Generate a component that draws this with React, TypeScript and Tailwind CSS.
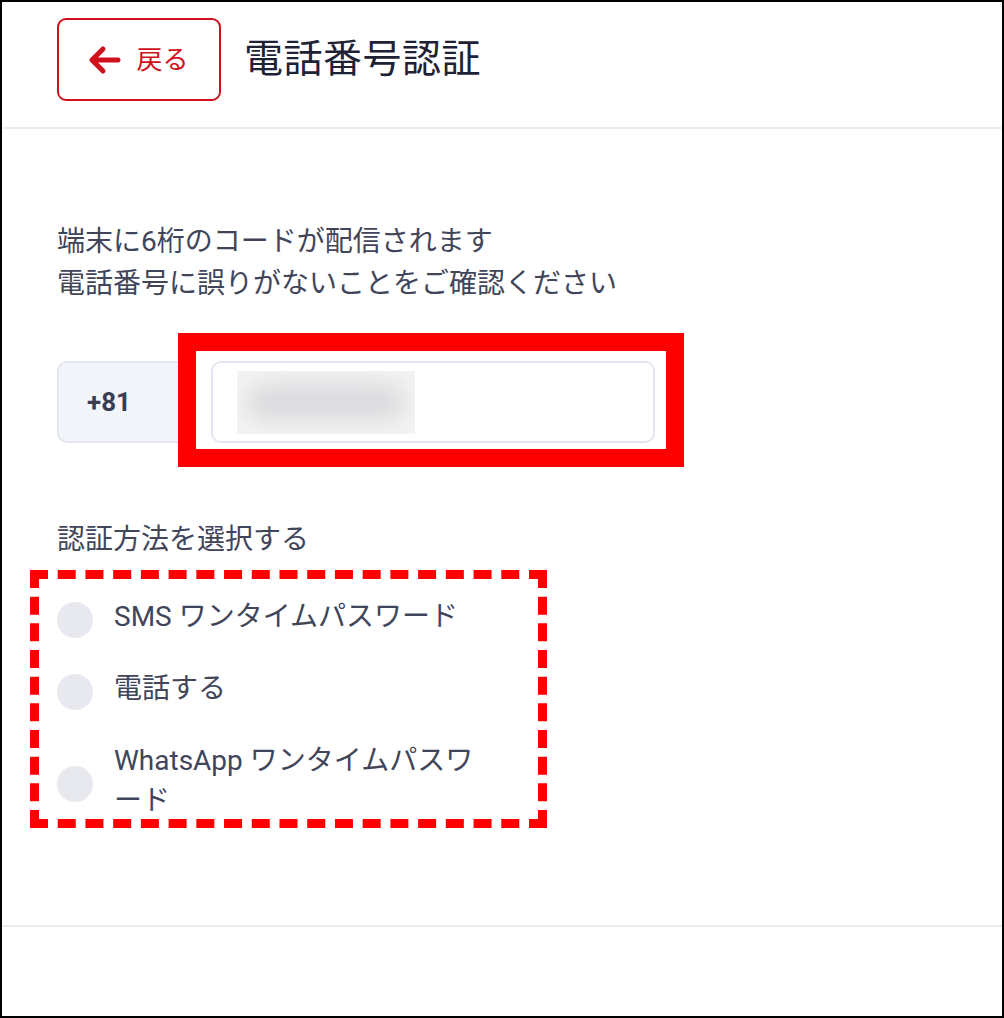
const methods = [
  { id: "sms", label: "SMS ワンタイムパスワード" },
  { id: "call", label: "電話する" },
  { id: "whatsapp", label: "WhatsApp ワンタイムパスワード" },
];

const App = () => {
  return (
    <div
      className="relative w-[1004px] h-[1018px] border-2 border-black bg-white overflow-hidden text-[#41455a]"
      style={{ fontFamily: 'Roboto, "Noto Sans CJK JP", sans-serif' }}
    >
      {/* Header */}
      <header className="h-[127px] flex items-center gap-[23px] pl-[55px] pb-[12px] pt-[2px] border-b-2 border-[#ebebf0]">
        <button className="w-[164px] h-[83px] flex items-center justify-center gap-[15px] rounded-[9px] border-2 border-[#cf111c] text-[#cf111c] pr-[2px]">
          <svg width="34" height="30" viewBox="0 0 34 30" fill="none">
            <path
              d="M31 15H5M16 4L5 15L16 26"
              stroke="#cf111c"
              strokeWidth="5"
              strokeLinecap="round"
              strokeLinejoin="round"
            />
          </svg>
          <span className="text-[26px] leading-none">戻る</span>
        </button>
        <h1 className="text-[39px] leading-none text-[#1e2235] tracking-[0.5px]">電話番号認証</h1>
      </header>

      {/* Body */}
      <main className="h-[798px] border-b-2 border-[#ebebf0] pl-[55px] pt-[92px]">
        <p className="text-[28px] leading-[42px]">
          端末に6桁のコードが配信されます
          <br />
          電話番号に誤りがないことをご確認ください
        </p>

        <div className="mt-[56px] flex gap-[16px]">
          <div className="w-[138px] h-[82px] flex items-center pl-[28px] rounded-[10px] border-2 border-[#e3e6ee] bg-[#f2f5f9] text-[26px] font-bold text-[#3a3e52]">
            +81
          </div>
          <div className="w-[444px] h-[82px] flex items-center pl-[24px] rounded-[10px] border-2 border-[#e3e6ee] bg-white">
            <div className="w-[178px] h-[63px] bg-[#f4f4f5] overflow-hidden flex items-center justify-center">
              <div className="w-[160px] h-[36px] bg-[#d9d9dc] blur-[12px] rounded-full" />
            </div>
          </div>
        </div>

        <p className="mt-[76px] text-[28px] leading-[42px]">認証方法を選択する</p>

        <div className="mt-[36px] flex flex-col gap-[32px]">
          {methods.map((m) => (
            <label key={m.id} className="flex items-center gap-[21px]">
              <span className="relative top-[3px] w-[36px] h-[36px] rounded-full bg-[#e8e9ef] shrink-0" />
              <span className="w-[372px] text-[28px] leading-[40px]">{m.label}</span>
            </label>
          ))}
        </div>
      </main>

      {/* Annotation overlays */}
      <div className="absolute left-[176px] top-[331px] w-[506px] h-[134px] border-[18px] border-[#ff0000]" />
      <div className="absolute left-[28px] top-[568px] w-[517px] h-[258px] border-[9px] border-dashed border-[#ff0000]" />
    </div>
  );
};

export default App;
